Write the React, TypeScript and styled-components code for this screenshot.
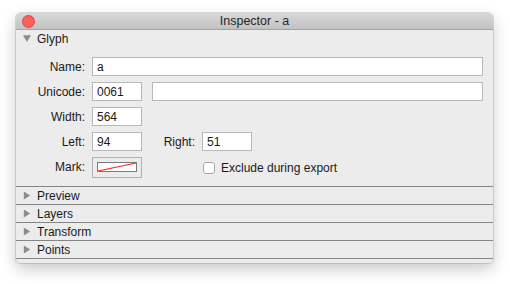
import { styled, createGlobalStyle } from 'styled-components';

const GlobalStyle = createGlobalStyle`
  html, body {
    margin: 0;
    padding: 0;
    background: #ffffff;
  }

  body {
    font-family: "Liberation Sans", Arial, sans-serif;
    font-size: 12px;
    color: #1a1a1a;
  }
`;

const Page = styled.div`
  width: 510px;
  height: 284px;
  padding: 13px 0 0 16px;
  box-sizing: border-box;
`;

const Window = styled.div`
  width: 477px;
  height: 250px;
  background: #ececec;
  border-radius: 5px 5px 4px 4px;
  box-shadow: 0 0 0 1px rgba(0, 0, 0, 0.12), 0 6px 16px rgba(0, 0, 0, 0.22);
  overflow: hidden;
  display: flex;
  flex-direction: column;
`;

const TitleBar = styled.div`
  position: relative;
  height: 16px;
  display: flex;
  align-items: center;
  justify-content: center;
  background: linear-gradient(#d9d8d9, #c3c2c3);
  border-bottom: 1px solid #a3a3a3;
  font-size: 12.5px;
  color: #262626;
`;

const CloseButton = styled.span`
  position: absolute;
  left: 6px;
  top: 2px;
  width: 11px;
  height: 11px;
  border-radius: 50%;
  background: #fc605c;
  border: 0.5px solid #e0443e;
`;

const SectionHeader = styled.div<{ $bordered?: boolean }>`
  height: 17px;
  display: flex;
  align-items: center;
  gap: 6px;
  padding-left: 7px;
  border-bottom: ${({ $bordered }) => ($bordered ? '1px solid #858585' : 'none')};
`;

const Arrow = styled.span<{ $open?: boolean }>`
  width: 8px;
  height: 8px;
  display: inline-block;
  background: #8c8c8c;
  clip-path: ${({ $open }) =>
    $open ? 'polygon(0 10%, 100% 10%, 50% 95%)' : 'polygon(10% 0, 90% 50%, 10% 100%)'};
`;

const GlyphBody = styled.div`
  display: flex;
  flex-direction: column;
  gap: 6px;
  padding: 10px 10px 10px 0;
  border-bottom: 1px solid #858585;
`;

const Row = styled.div`
  display: flex;
  align-items: center;
  height: 19px;
`;

const Label = styled.label<{ $width: number }>`
  width: ${({ $width }) => $width}px;
  text-align: right;
  margin-right: 7px;
  flex-shrink: 0;
`;

const Field = styled.div<{ $width?: number }>`
  height: 19px;
  box-sizing: border-box;
  background: #ffffff;
  border: 1px solid #b8b8b8;
  padding-left: 4px;
  display: flex;
  align-items: center;
  ${({ $width }) => ($width ? `width: ${$width}px; flex-shrink: 0;` : 'flex: 1;')}
`;

const Spacer = styled.div<{ $width: number }>`
  width: ${({ $width }) => $width}px;
  flex-shrink: 0;
`;

const MarkButton = styled.div`
  width: 50px;
  height: 21px;
  box-sizing: border-box;
  border: 1px solid #b0b0b0;
  display: flex;
  align-items: center;
  justify-content: center;
  margin-top: 1px;
`;

const Swatch = styled.svg`
  width: 40px;
  height: 10px;
  display: block;
`;

const Checkbox = styled.span`
  width: 12px;
  height: 12px;
  box-sizing: border-box;
  border: 1px solid #a8a8a8;
  border-radius: 3px;
  background: #ffffff;
  margin-right: 6px;
  margin-top: 3px;
`;

const CheckLabel = styled.span`
  margin-top: 2px;
`;

const Footer = styled.div`
  flex: 1;
`;

const sections = ['Preview', 'Layers', 'Transform', 'Points'];

export default function App() {
  return (
    <>
      <GlobalStyle />
      <Page>
        <Window>
          <TitleBar>
            <CloseButton />
            Inspector - a
          </TitleBar>
          <SectionHeader>
            <Arrow $open />
            Glyph
          </SectionHeader>
          <GlyphBody>
            <Row>
              <Label $width={69}>Name:</Label>
              <Field>a</Field>
            </Row>
            <Row>
              <Label $width={69}>Unicode:</Label>
              <Field $width={50}>0061</Field>
              <Spacer $width={10} />
              <Field />
            </Row>
            <Row>
              <Label $width={69}>Width:</Label>
              <Field $width={50}>564</Field>
            </Row>
            <Row>
              <Label $width={69}>Left:</Label>
              <Field $width={50}>94</Field>
              <Label $width={53}>Right:</Label>
              <Field $width={50}>51</Field>
            </Row>
            <Row>
              <Label $width={69}>Mark:</Label>
              <MarkButton>
                <Swatch viewBox="0 0 40 10">
                  <rect x="0.5" y="0.5" width="39" height="9" fill="#ffffff" stroke="#7a7a7a" />
                  <line x1="1" y1="9" x2="39" y2="1" stroke="#ff2020" strokeWidth="1.2" />
                </Swatch>
              </MarkButton>
              <Spacer $width={61} />
              <Checkbox />
              <CheckLabel>Exclude during export</CheckLabel>
            </Row>
          </GlyphBody>
          {sections.map((name) => (
            <SectionHeader key={name} $bordered>
              <Arrow />
              {name}
            </SectionHeader>
          ))}
          <Footer />
        </Window>
      </Page>
    </>
  );
}
